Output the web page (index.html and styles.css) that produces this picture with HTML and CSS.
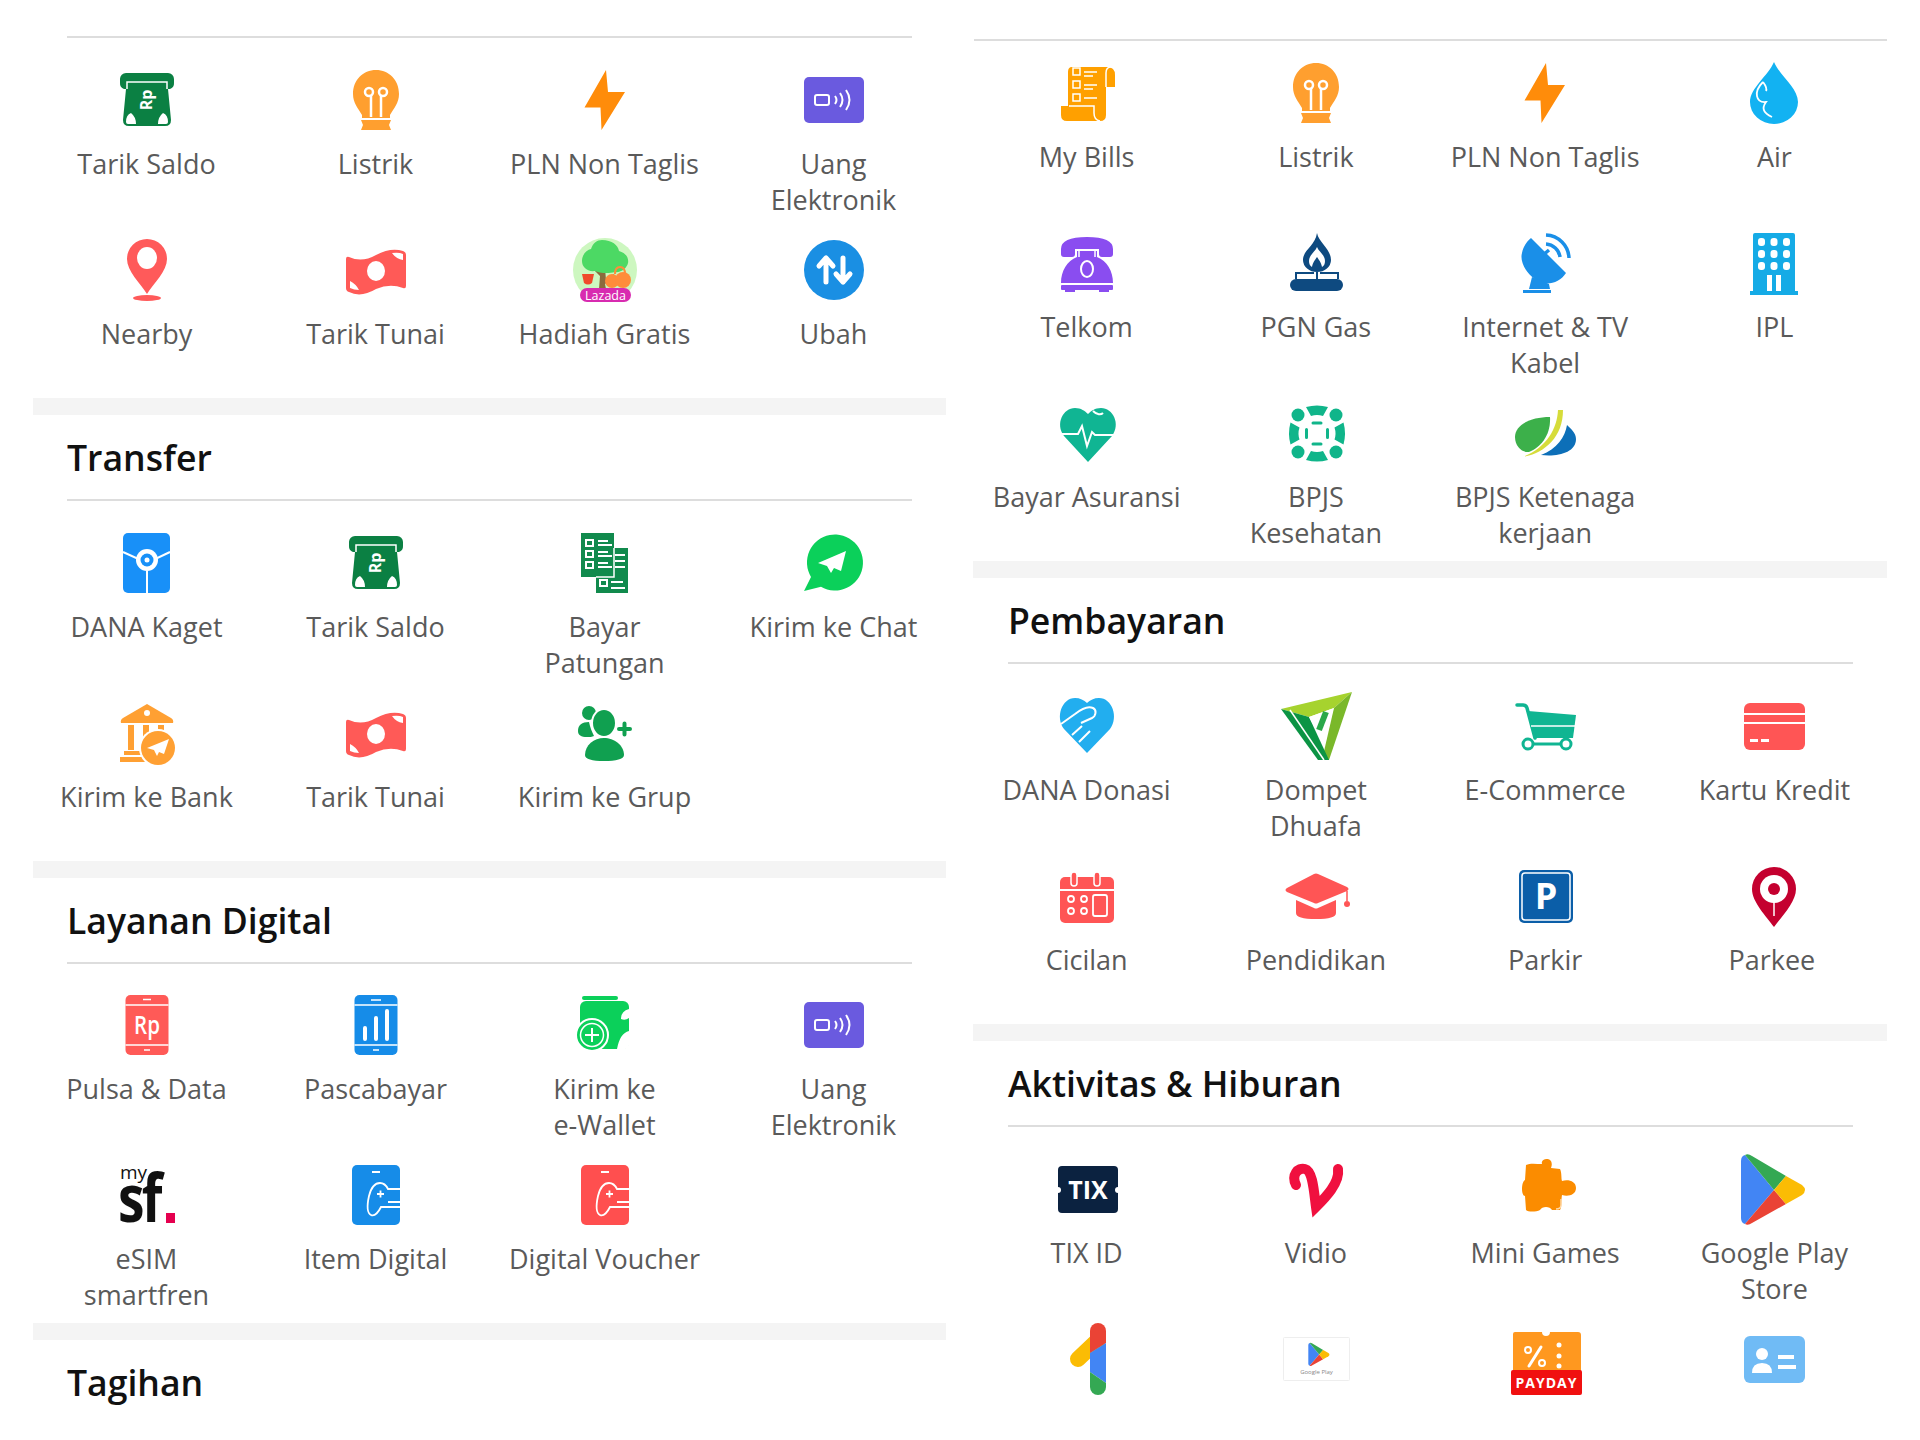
FILE: index.html
```html
<!DOCTYPE html>
<html lang="en">
<head>
    <meta charset="UTF-8">
    <meta name="viewport" content="width=device-width, initial-scale=1.0">
    <title>Semua Layanan</title>
    <link rel="stylesheet" href="styles.css">
</head>
<body>
    <!-- icon sprite: every symbol is centred on 40,40 -->
    <svg class="sprite" xmlns="http://www.w3.org/2000/svg">
        <defs>
            <g id="play-mark">
                <path fill="#4285f4" d="M7 12V69q0 5 4 6L40 41 11 6Q7 7 7 12z"/>
                <path fill="#34a853" d="M11 6q3-2 7 1L52 27 40 41z"/>
                <path fill="#ea4335" d="M11 75q3 2 7-1L52 55 40 41z"/>
                <path fill="#fbbc04" d="M52 27l16 9q6 5 0 10L52 55 40 41z"/>
            </g>
        </defs>
        <symbol id="i-saldo" viewBox="-10 -10 100 100">
            <path fill="#0b8043" d="M19 13h42a6 6 0 0 1 6 6v4a6 6 0 0 1-4 6h-2l3 31q0 6-6 6H22q-6 0-6-6l3-31h-2a6 6 0 0 1-4-6v-4a6 6 0 0 1 6-6z"/>
            <path fill="none" stroke="#fff" stroke-width="1.5" d="M20 29v-7h40v7"/>
            <path fill="#fff" d="M19 62q0-7 5-9 5 4 5 11h-8q-2 0-2-2zM61 62q0-7-5-9-5 4-5 11h8q2 0 2-2z"/>
            <text class="icon-text" transform="translate(45 40) rotate(-90)" text-anchor="middle" font-size="16" font-weight="700" fill="#fff">Rp</text>
        </symbol>
        <symbol id="i-listrik" viewBox="-10 -10 100 100">
            <path fill="#ff9f2f" d="M40 10c13 0 23 10 23 24 0 9-5 14-9 21v3H26v-3c-4-7-9-12-9-21 0-14 10-24 23-24zM25 60h30l-2 5 2 5H25l2-5z"/>
            <g fill="none" stroke="#fff" stroke-width="2.500"><circle cx="33" cy="32" r="4"/><circle cx="47" cy="32" r="4"/><path d="M35 36v21M45 36v21"/></g>
        </symbol>
        <symbol id="i-pln" viewBox="-10 -10 100 100">
            <path fill="#ff8c0a" d="M41 10 19.500 47.500h16L36.500 70 60 32H43z"/>
        </symbol>
        <symbol id="i-uang" viewBox="-10 -10 100 100">
            <rect x="10" y="17" width="60" height="46" rx="5" fill="#6a5adf"/>
            <g fill="none" stroke="#fff" stroke-width="2"><rect x="21" y="35" width="14" height="10" rx="2"/><path d="M41 36q3 4 0 8M46 33q5 7 0 14M52 30q7 10 0 20"/></g>
        </symbol>
        <symbol id="i-nearby" viewBox="-10 -10 100 100">
            <path fill="#ff5a5a" d="M40 9a20 20 0 0 1 20 20c0 12-13 24-20 35-7-11-20-23-20-35A20 20 0 0 1 40 9z"/>
            <ellipse cx="40" cy="28" rx="10" ry="11" fill="#fff"/>
            <ellipse cx="40" cy="68" rx="14" ry="3" fill="#ff5a5a"/>
        </symbol>
        <symbol id="i-tunai" viewBox="-10 -10 100 100">
            <path fill="#ff5a57" d="M10 29q0-3 3-2 13 6 27-2 15-8 27-4 3 1 3 4v31q0 3-3 2-13-5-27 1-15 9-27 3-3-1-3-4z"/>
            <ellipse cx="40" cy="41" rx="9" ry="10" fill="#fff"/>
            <path fill="#fff" d="M56 23q7-1 11 1v6q-7-1-11-7zM14 51q6 3 9 9-5 0-9-2z"/>
        </symbol>
        <symbol id="i-hadiah" viewBox="-10 -10 100 100">
            <circle cx="40" cy="40" r="32" fill="#cdf7c0"/>
            <path fill="#8b6b3d" d="M35 38h5l1 12 8-6v3l-9 7 1 5h-7l1-13-6-6 2-2 4 4z"/>
            <path fill="#4cd964" d="M37 10c10 0 16 5 17 11 7 2 10 7 9 12s-7 10-13 9c-7 2-16 1-20-1-8 1-13-4-13-10 0-7 5-11 9-12 2-6 6-9 11-9z"/>
            <path fill="#f04a2a" d="M17 44h12l-2 9q-4 3-8 0z"/>
            <circle cx="47" cy="51" r="7" fill="#ff8c3a"/><circle cx="58" cy="50" r="8" fill="#ff8c3a"/>
            <path fill="none" stroke="#ff8c3a" stroke-width="2" d="M50 44q0-7 5-7t5 7"/>
            <rect x="15" y="58" width="51" height="14" rx="7" fill="#d82bb0"/>
            <text class="icon-text" x="40.500" y="69.500" text-anchor="middle" font-size="12.500" fill="#fff">Lazada</text>
        </symbol>
        <symbol id="i-ubah" viewBox="-10 -10 100 100">
            <circle cx="40" cy="40" r="30" fill="#1a8fe3"/>
            <path fill="none" stroke="#fff" stroke-width="5" stroke-linecap="round" stroke-linejoin="round" d="M32 52V28l-7 8M32 28l7 8M49 28v24l-7-8M49 52l7-8"/>
        </symbol>
        <symbol id="i-kaget" viewBox="-10 -10 100 100">
            <rect x="16" y="10" width="47" height="60" rx="5" fill="#1890f8"/>
            <path fill="none" stroke="#fff" stroke-width="2" d="M16 29l24 11 23-11M40 48v22"/>
            <circle cx="40" cy="37" r="11" fill="#fff"/><circle cx="40" cy="37" r="6.500" fill="#1890f8"/><circle cx="40" cy="37" r="2.500" fill="#fff"/>
        </symbol>
        <symbol id="i-patungan" viewBox="-10 -10 100 100">
            <path fill="#118a4d" d="M16 10h33v15h14v45H31V54H16z"/>
            <path fill="none" stroke="#fff" stroke-width="2" d="M21 17h7v6h-7zM21 28h7v6h-7zM21 39h7v6h-7zM33 18h10M33 22h14M33 29h10M33 33h14M33 40h10M33 44h14M50 32h10M50 38h10M50 44h10M35 57h7v6h-7zM46 59h12M46 65h14"/>
            <path fill="none" stroke="#fff" stroke-width="1.500" d="M31 54h18V25"/>
        </symbol>
        <symbol id="i-chat" viewBox="-10 -10 100 100">
            <path fill="#0bd05a" d="M10 68l7-14A28 28 0 1 1 27 63.800z"/>
            <path fill="#fff" d="M52 28 24 40l9 3 4 7 3-5 7 3z"/>
        </symbol>
        <symbol id="i-bank" viewBox="-10 -10 100 100">
            <path fill="#ffa033" d="M40 11l24 14q3 2 2 5H14q-1-3 2-5z"/>
            <circle cx="40" cy="20" r="3" fill="#fff"/>
            <path fill="#ffa033" d="M21 32h6v25h-6zM36 32h6v22h-6zM51 32h6v5h-6zM17 58h22v4H17zM13 64h26v5H13z"/>
            <circle cx="51" cy="55" r="19" fill="#fff"/><circle cx="51" cy="55" r="17" fill="#ffa033"/>
            <path fill="#fff" d="M62 46 40 55l7 2 3 6 2-4 5 2z"/>
        </symbol>
        <symbol id="i-grup" viewBox="-10 -10 100 100">
            <g fill="#10a050">
                <circle cx="24" cy="20" r="7"/>
                <path d="M13 38c0-6 4-9 11-9 1 5 3 10 5 14-2 1-4 1-7 1-6 0-9-2-9-6z"/>
                <ellipse cx="39" cy="30" rx="12" ry="14" stroke="#fff" stroke-width="2"/>
                <path d="M20 62c0-10 9-17 19-17s20 7 20 17c0 4-8 6-20 6s-19-2-19-6z"/>
            </g>
            <path fill="none" stroke="#10a050" stroke-width="4" stroke-linecap="round" d="M54 36h11M59.500 30.500v11"/>
        </symbol>
        <symbol id="i-pulsa" viewBox="-10 -10 100 100">
            <rect x="18.500" y="10" width="43" height="60" rx="5" fill="#ff5a57"/>
            <path stroke="#fff" stroke-width="1.500" d="M18.500 20h43M18.500 60h43M36 14.500h8M37 65h6"/>
            <text class="icon-text" transform="translate(40 49) scale(.82 1)" text-anchor="middle" font-size="25" font-weight="600" fill="#fff">Rp</text>
        </symbol>
        <symbol id="i-pasca" viewBox="-10 -10 100 100">
            <rect x="18.500" y="10" width="43" height="60" rx="5" fill="#168ce8"/>
            <path stroke="#fff" stroke-width="1.500" d="M18.500 20h43M18.500 60h43M35 15h10M37 65h6"/>
            <path stroke="#fff" stroke-width="4" stroke-linecap="round" d="M29 54V43M40 54V33M51 54V26"/>
        </symbol>
        <symbol id="i-wallet" viewBox="-10 -10 100 100">
            <rect x="15" y="16" width="49" height="48" rx="6" fill="#0bd05a"/>
            <rect x="17" y="11" width="36" height="4" rx="2" fill="#0bd05a"/>
            <path fill="#fff" d="M64 24q-8 2-8 10 4 2 8-1zM64 46q-9 2-12 18h8q4 0 4-4z"/>
            <circle cx="27" cy="50" r="16" fill="#0bd05a" stroke="#fff" stroke-width="2"/>
            <circle cx="27" cy="50" r="11.500" fill="none" stroke="#fff" stroke-width="1.500"/>
            <path stroke="#fff" stroke-width="2" d="M20 50h14M27 43v14"/>
        </symbol>
        <symbol id="i-sf" viewBox="-10 -10 100 100">
            <text class="icon-text" x="13" y="24" font-size="19" fill="#111">my</text>
            <text class="icon-text" transform="translate(11 67) scale(.92 1.15)" font-size="58" font-weight="700" letter-spacing="-3" fill="#111">sf</text>
            <rect x="59" y="58" width="9" height="10" fill="#e5004f"/>
        </symbol>
        <symbol id="i-game" viewBox="-10 -10 100 100">
            <rect x="16" y="10" width="48" height="60" rx="5" fill="currentColor"/>
            <g fill="none" stroke="#fff" stroke-width="1.800">
                <path d="M36 17h8M64 34H52c-2-4-5-6-8-6-6 0-9 5-11 13-2 9-2 17 2 19 4 2 8-4 10-8h19M41 39h7M44.500 35.500v7M52 47h12"/>
            </g>
        </symbol>
        <symbol id="i-bills" viewBox="-10 -10 100 100">
            <path fill="#ffa000" d="M25 14h35q8 0 8 8v12h-9v28q0 6-6 6H20q-6 0-6-6v-9h7V19q0-5 4-5z"/>
            <path fill="none" stroke="#fff" stroke-width="1.500" d="M59 34V20q0-6 5-6M22 53h25v7q0 7 6 8M26 15h7v7h-7zM26 28h7v7h-7zM26 41h7v7h-7zM37 19h13M37 23h9M37 32h13M37 36h9M37 45h13"/>
        </symbol>
        <symbol id="i-air" viewBox="-10 -10 100 100">
            <path fill="#12b2f2" d="M40 9c6 14 24 26 24 40a24 22 0 0 1-48 0c0-14 18-26 24-40z"/>
            <path fill="none" stroke="#fff" stroke-width="1.800" d="M29 29c-10 10-7 21 3 20-5 7-2 11 6 15M29 29c3 4 4 7 3 9"/>
        </symbol>
        <symbol id="i-telkom" viewBox="-10 -10 100 100">
            <g fill="#8a4df0">
                <path d="M14 26q0-12 26-12t26 12v5q0 3-3 3h-8q-3 0-3-3v-5H28v5q0 3-3 3h-8q-3 0-3-3z"/>
                <path d="M30 28h20v6c10 4 16 14 16 26H14c0-12 6-22 16-26z"/>
                <rect x="14" y="62" width="52" height="5" rx="1"/><rect x="18" y="66" width="10" height="3"/><rect x="52" y="66" width="10" height="3"/>
            </g>
            <ellipse cx="40" cy="46" rx="6" ry="8" fill="none" stroke="#fff" stroke-width="2"/>
            <path stroke="#fff" stroke-width="1.500" d="M32 28v6M48 28v6"/>
        </symbol>
        <symbol id="i-gas" viewBox="-10 -10 100 100">
            <path fill="#0e4a80" d="M41 10c2 10 14 16 14 27a14 12 0 0 1-28 0c0-10 12-14 14-27z"/>
            <path fill="#fff" d="M41 24c2 5 8 8 8 14 0 3-1 5-3 6-1-5-3-7-5-10-2 3-4 5-5 10-2-1-3-3-3-6 0-6 6-9 8-14z"/>
            <path fill="none" stroke="#0e4a80" stroke-width="2" d="M20 56v-6h18M62 56v-6H44M41 49v7"/>
            <rect x="14" y="56" width="53" height="12" rx="6" fill="#0e4a80"/>
        </symbol>
        <symbol id="i-internet" viewBox="-10 -10 100 100">
            <path fill="#1a8fe8" d="M26 15 61 50c-5 8-15 12-23 10-14-4-24-20-21-30 1-6 5-12 9-15z"/>
            <path fill="#1a8fe8" d="M27 54l17 7 1 5H24zM18 67h28v3H18z"/>
            <path fill="none" stroke="#1a8fe8" stroke-width="3.500" d="M38 32l6-5M41 21a15 15 0 0 1 14 13M41 12a24 24 0 0 1 23 23"/>
        </symbol>
        <symbol id="i-ipl" viewBox="-10 -10 100 100">
            <path fill="#15abe6" d="M19 12q0-2 2-2h38q2 0 2 2v56h3v4H16v-4h3z"/>
            <g fill="#fff">
                <rect x="24" y="15" width="7" height="8" rx="3"/><rect x="36.500" y="15" width="7" height="8" rx="3"/><rect x="49" y="15" width="7" height="8" rx="3"/>
                <rect x="24" y="27" width="7" height="8" rx="3"/><rect x="36.500" y="27" width="7" height="8" rx="3"/><rect x="49" y="27" width="7" height="8" rx="3"/>
                <rect x="24" y="39" width="7" height="8" rx="3"/><rect x="36.500" y="39" width="7" height="8" rx="3"/><rect x="49" y="39" width="7" height="8" rx="3"/>
                <rect x="33" y="52" width="5" height="16"/><rect x="42" y="52" width="5" height="16"/>
            </g>
        </symbol>
        <symbol id="i-asuransi" viewBox="-10 -10 100 100">
            <path fill="#10b593" d="M41 69 17 43C8 31 16 15 28 15c6 0 10 3 13 6 3-3 7-6 13-6 12 0 20 16 11 28z"/>
            <path fill="none" stroke="#fff" stroke-width="2" d="M14 41h17l4-8 5 20 5-14 3 3h20M46 18c4 4 8 4 10 2"/>
        </symbol>
        <symbol id="i-bpjs" viewBox="-10 -10 100 100">
            <g fill="#10b58a">
                <circle cx="22" cy="22" r="6.500"/><circle cx="60" cy="22" r="6.500"/><circle cx="22" cy="59" r="6.500"/><circle cx="60" cy="59" r="6.500"/>
                <path d="M30 14q11-3 22 0l-5 9q-6-2-12 0z"/>
                <path d="M30 14q11-3 22 0l-5 9q-6-2-12 0z" transform="rotate(90 41 40.500)"/>
                <path d="M30 14q11-3 22 0l-5 9q-6-2-12 0z" transform="rotate(180 41 40.500)"/>
                <path d="M30 14q11-3 22 0l-5 9q-6-2-12 0z" transform="rotate(270 41 40.500)"/>
            </g>
            <path fill="none" stroke="#10b58a" stroke-width="3" stroke-linecap="round" d="M37 30h8M37 51h8M30.500 36.500v8M51.500 36.500v8"/>
        </symbol>
        <symbol id="i-bpjstk" viewBox="-10 -10 100 100">
            <path fill="#3cb04a" d="M45 24C25 24 10 32 10 44c0 10 8 16 14 15 12-5 22-17 21-35z"/>
            <path fill="#d6dc3a" d="M58 17h-5C52 36 42 54 18 64c22-4 40-20 40-47z"/>
            <path fill="#0d6fb8" d="M62 32C60 44 52 56 36 62c16 2 35-2 35-16 0-6-5-10-9-14z"/>
        </symbol>
        <symbol id="i-donasi" viewBox="-10 -10 100 100">
            <path fill="#22aeef" d="M40 67 17 43C8 31 15 12 28 12c5 0 9 2 12 5 3-3 7-5 12-5 13 0 20 19 11 31z"/>
            <path fill="none" stroke="#fff" stroke-width="2" d="M14 38 28 28c5-4 12-9 18-6 4 2 3 8-1 10l-11 5M25 49l10-9M32 56l11-11"/>
        </symbol>
        <symbol id="i-dompet" viewBox="-10 -10 100 100">
            <path fill="#a6d32e" d="M5 23 76 6 58 22 33 31z"/>
            <path fill="#7ab82a" d="M76 6 53 74h-7L58 22z"/>
            <path fill="#0b9444" d="M5 23l28 8 20 43H42z"/>
            <path stroke="#fff" stroke-width="1.500" d="M14 24l34 50"/>
            <path fill="#fff" d="M33 31l25-9-15 27z"/>
            <path stroke="#2aa84a" stroke-width="6" d="M50 26 43 44"/>
        </symbol>
        <symbol id="i-ecommerce" viewBox="-10 -10 100 100">
            <path fill="#10b592" d="M23 25l48 4-3 23H29z"/>
            <path fill="none" stroke="#10b592" stroke-width="3.500" stroke-linecap="round" d="M12 19h6q3 0 4 3l8 30"/>
            <path fill="none" stroke="#10b592" stroke-width="3" d="M29 58h26"/>
            <circle cx="23" cy="58" r="5" fill="none" stroke="#10b592" stroke-width="3"/><circle cx="61" cy="58" r="5" fill="none" stroke="#10b592" stroke-width="3"/>
            <path stroke="#fff" stroke-width="1.500" d="M26 40h44"/>
        </symbol>
        <symbol id="i-kartu" viewBox="-10 -10 100 100">
            <rect x="10" y="17" width="61" height="47" rx="6" fill="#ff5555"/>
            <path stroke="#fff" stroke-width="2" d="M10 28h61M10 37h61"/>
            <path fill="#fff" d="M16 53h8v3h-8zM27 53h8v3h-8z"/>
        </symbol>
        <symbol id="i-cicilan" viewBox="-10 -10 100 100">
            <rect x="13" y="21" width="54" height="46" rx="5" fill="#ff5555"/>
            <g fill="#ff5555" stroke="#fff" stroke-width="1.500"><rect x="24" y="16" width="6" height="14" rx="3"/><rect x="47" y="16" width="6" height="14" rx="3"/></g>
            <g fill="none" stroke="#fff" stroke-width="1.800">
                <path d="M13 34h54"/>
                <circle cx="24" cy="43" r="3"/><circle cx="37" cy="43" r="3"/><circle cx="24" cy="55" r="3"/><circle cx="37" cy="55" r="3"/>
                <rect x="46" y="39" width="14" height="21" rx="2"/>
            </g>
        </symbol>
        <symbol id="i-cap" viewBox="-10 -10 100 100">
            <path fill="#ff5555" d="M38 18q2-1 4 0l29 13q3 2 0 4L42 47q-2 1-4 0L11 36q-3-2 0-4zM20 44l18 8q2 1 4 0l18-8v13q0 6-20 6t-20-6z"/>
            <path fill="none" stroke="#ff5555" stroke-width="1.500" d="M71 35v10"/>
            <circle cx="71" cy="48" r="3" fill="#ff5555"/>
        </symbol>
        <symbol id="i-parkir" viewBox="-10 -10 100 100">
            <rect x="14" y="14" width="54" height="53" rx="5" fill="#0b5ea8"/>
            <rect x="17" y="17" width="48" height="47" rx="3" fill="none" stroke="#fff" stroke-width="1.500"/>
            <text class="icon-text" x="41" y="53" text-anchor="middle" font-size="36" font-weight="700" fill="#fff">P</text>
        </symbol>
        <symbol id="i-parkee" viewBox="-10 -10 100 100">
            <path fill="#c4002f" d="M40 11a22 22 0 0 1 22 22c0 13-14 27-22 38-8-11-22-25-22-38a22 22 0 0 1 22-22z"/>
            <circle cx="40" cy="33" r="14" fill="#fff"/><circle cx="40" cy="33" r="6" fill="#c4002f"/>
            <path stroke="#fff" stroke-width="1.500" d="M40 46v14"/>
        </symbol>
        <symbol id="i-tix" viewBox="-10 -10 100 100">
            <rect x="11" y="17" width="60" height="47" rx="4" fill="#0b2240"/>
            <circle cx="11" cy="41" r="3" fill="#fff"/><circle cx="71" cy="41" r="3" fill="#fff"/>
            <text class="icon-text" x="41" y="50" text-anchor="middle" font-size="25" font-weight="700" fill="#fff">TIX</text>
        </symbol>
        <symbol id="i-vidio" viewBox="-10 -10 100 100">
            <path fill="none" stroke="#f0103f" stroke-width="10" stroke-linecap="round" d="M20 36c-5-10 2-18 9-16 8 2 9 24 11 38 9-9 24-24 22-38"/>
        </symbol>
        <symbol id="i-games" viewBox="-10 -10 100 100">
            <path fill="#fb8c00" d="M42 10c4 0 6 4 4 9l9 1c2 4 1 9 2 12 6-2 14 0 14 7s-8 9-14 7c-1 5 0 12-2 15h-8c-2-4-10-4-12 0-4 2-12 2-14 0l-1-14c-4 0-4-14 0-16l1-15c4-2 10-1 16-1-1-3 2-5 5-5z"/>
            <path fill="none" stroke="#ffd9a8" stroke-width="1.500" d="M56 50v6q0 4-5 4"/>
        </symbol>
        <symbol id="i-gplay" viewBox="-10 -10 100 100">
            <use href="#play-mark"/>
        </symbol>
        <symbol id="i-gone" viewBox="-10 -10 100 100">
            <path fill="none" stroke="#fbbc04" stroke-width="16" stroke-linecap="round" d="M31 40l19-18"/>
            <path fill="#ea4335" d="M43 12a8 8 0 0 1 16 0V24L43 34z"/>
            <path fill="#4285f4" d="M43 34l16-10v40l-16-11z"/>
            <path fill="#34a853" d="M43 53l16 11v4a8 8 0 0 1-16 0z"/>
        </symbol>
        <symbol id="i-gcard" viewBox="-10 -10 100 100">
            <rect x="7.500" y="18.500" width="66" height="43" rx="1" fill="#fff" stroke="#eee"/>
            <use href="#play-mark" transform="translate(30 22) scale(.33)"/>
            <text class="icon-text" x="40.500" y="55" text-anchor="middle" font-size="6" fill="#888">Google Play</text>
        </symbol>
        <symbol id="i-payday" viewBox="-10 -10 100 100">
            <path fill="#ff981f" d="M10 13h27a4 4 0 0 0 8 0h28q3 0 3 3v38H8V15q0-2 2-2z"/>
            <rect x="6" y="51" width="71" height="25" rx="2" fill="#f01010"/>
            <text class="icon-text" x="41.500" y="69" text-anchor="middle" font-size="14" font-weight="700" letter-spacing="1" fill="#fff">PAYDAY</text>
            <path stroke="#fff" stroke-width="3" stroke-linecap="round" d="M36 28 24 47"/>
            <g fill="none" stroke="#fff" stroke-width="2"><circle cx="23" cy="31" r="3"/><circle cx="37" cy="44" r="3"/></g>
            <g fill="#fff"><circle cx="54" cy="26" r="2.500"/><circle cx="54" cy="37" r="2.500"/><circle cx="54" cy="47" r="2.500"/></g>
        </symbol>
        <symbol id="i-contact" viewBox="-10 -10 100 100">
            <rect x="10" y="17" width="61" height="47" rx="6" fill="#70bbf5"/>
            <circle cx="28" cy="35" r="6" fill="#fff"/>
            <path fill="#fff" d="M18 54q0-10 10-10t10 10zM44 36h16v4H44zM44 46h18v4H44z"/>
        </symbol>
    </svg>

    <div class="page">
        <div class="column column-left">
            <div class="rule"></div>
            <div class="menu-grid menu-grid-first">
                <div class="menu-item"><div class="icon"><svg><use href="#i-saldo"/></svg></div><div class="label">Tarik Saldo</div></div>
                <div class="menu-item"><div class="icon"><svg><use href="#i-listrik"/></svg></div><div class="label">Listrik</div></div>
                <div class="menu-item"><div class="icon"><svg><use href="#i-pln"/></svg></div><div class="label">PLN Non Taglis</div></div>
                <div class="menu-item"><div class="icon"><svg><use href="#i-uang"/></svg></div><div class="label">Uang<br>Elektronik</div></div>
                <div class="menu-item"><div class="icon"><svg><use href="#i-nearby"/></svg></div><div class="label">Nearby</div></div>
                <div class="menu-item"><div class="icon"><svg><use href="#i-tunai"/></svg></div><div class="label">Tarik Tunai</div></div>
                <div class="menu-item"><div class="icon"><svg><use href="#i-hadiah"/></svg></div><div class="label">Hadiah Gratis</div></div>
                <div class="menu-item"><div class="icon"><svg><use href="#i-ubah"/></svg></div><div class="label">Ubah</div></div>
            </div>
            <div class="band"></div>
            <div class="section-head"><h2>Transfer</h2></div>
            <div class="menu-grid">
                <div class="menu-item"><div class="icon"><svg><use href="#i-kaget"/></svg></div><div class="label">DANA Kaget</div></div>
                <div class="menu-item"><div class="icon"><svg><use href="#i-saldo"/></svg></div><div class="label">Tarik Saldo</div></div>
                <div class="menu-item"><div class="icon"><svg><use href="#i-patungan"/></svg></div><div class="label">Bayar<br>Patungan</div></div>
                <div class="menu-item"><div class="icon"><svg><use href="#i-chat"/></svg></div><div class="label">Kirim ke Chat</div></div>
                <div class="menu-item"><div class="icon"><svg><use href="#i-bank"/></svg></div><div class="label">Kirim ke Bank</div></div>
                <div class="menu-item"><div class="icon"><svg><use href="#i-tunai"/></svg></div><div class="label">Tarik Tunai</div></div>
                <div class="menu-item"><div class="icon"><svg><use href="#i-grup"/></svg></div><div class="label">Kirim ke Grup</div></div>
            </div>
            <div class="band"></div>
            <div class="section-head"><h2>Layanan Digital</h2></div>
            <div class="menu-grid menu-grid-tight">
                <div class="menu-item"><div class="icon"><svg><use href="#i-pulsa"/></svg></div><div class="label">Pulsa &amp; Data</div></div>
                <div class="menu-item"><div class="icon"><svg><use href="#i-pasca"/></svg></div><div class="label">Pascabayar</div></div>
                <div class="menu-item"><div class="icon"><svg><use href="#i-wallet"/></svg></div><div class="label">Kirim ke<br>e-Wallet</div></div>
                <div class="menu-item"><div class="icon"><svg><use href="#i-uang"/></svg></div><div class="label">Uang<br>Elektronik</div></div>
                <div class="menu-item"><div class="icon"><svg><use href="#i-sf"/></svg></div><div class="label">eSIM<br>smartfren</div></div>
                <div class="menu-item"><div class="icon icon-blue"><svg><use href="#i-game"/></svg></div><div class="label">Item Digital</div></div>
                <div class="menu-item"><div class="icon icon-red"><svg><use href="#i-game"/></svg></div><div class="label">Digital Voucher</div></div>
            </div>
            <div class="band"></div>
            <div class="section-head section-head-plain"><h2>Tagihan</h2></div>
        </div>

        <div class="column column-right">
            <div class="rule rule-wide"></div>
            <div class="menu-grid menu-grid-top">
                <div class="menu-item"><div class="icon"><svg><use href="#i-bills"/></svg></div><div class="label">My Bills</div></div>
                <div class="menu-item"><div class="icon"><svg><use href="#i-listrik"/></svg></div><div class="label">Listrik</div></div>
                <div class="menu-item"><div class="icon"><svg><use href="#i-pln"/></svg></div><div class="label">PLN Non Taglis</div></div>
                <div class="menu-item"><div class="icon"><svg><use href="#i-air"/></svg></div><div class="label">Air</div></div>
                <div class="menu-item"><div class="icon"><svg><use href="#i-telkom"/></svg></div><div class="label">Telkom</div></div>
                <div class="menu-item"><div class="icon"><svg><use href="#i-gas"/></svg></div><div class="label">PGN Gas</div></div>
                <div class="menu-item"><div class="icon"><svg><use href="#i-internet"/></svg></div><div class="label">Internet &amp; TV<br>Kabel</div></div>
                <div class="menu-item"><div class="icon"><svg><use href="#i-ipl"/></svg></div><div class="label">IPL</div></div>
                <div class="menu-item"><div class="icon"><svg><use href="#i-asuransi"/></svg></div><div class="label">Bayar Asuransi</div></div>
                <div class="menu-item"><div class="icon"><svg><use href="#i-bpjs"/></svg></div><div class="label">BPJS<br>Kesehatan</div></div>
                <div class="menu-item"><div class="icon"><svg><use href="#i-bpjstk"/></svg></div><div class="label">BPJS Ketenaga<br>kerjaan</div></div>
            </div>
            <div class="band"></div>
            <div class="section-head"><h2>Pembayaran</h2></div>
            <div class="menu-grid">
                <div class="menu-item"><div class="icon"><svg><use href="#i-donasi"/></svg></div><div class="label">DANA Donasi</div></div>
                <div class="menu-item"><div class="icon"><svg><use href="#i-dompet"/></svg></div><div class="label">Dompet<br>Dhuafa</div></div>
                <div class="menu-item"><div class="icon"><svg><use href="#i-ecommerce"/></svg></div><div class="label">E-Commerce</div></div>
                <div class="menu-item"><div class="icon"><svg><use href="#i-kartu"/></svg></div><div class="label">Kartu Kredit</div></div>
                <div class="menu-item"><div class="icon"><svg><use href="#i-cicilan"/></svg></div><div class="label">Cicilan</div></div>
                <div class="menu-item"><div class="icon"><svg><use href="#i-cap"/></svg></div><div class="label">Pendidikan</div></div>
                <div class="menu-item"><div class="icon"><svg><use href="#i-parkir"/></svg></div><div class="label">Parkir</div></div>
                <div class="menu-item"><div class="icon"><svg><use href="#i-parkee"/></svg></div><div class="label label-parkee">Parkee</div></div>
            </div>
            <div class="band"></div>
            <div class="section-head"><h2>Aktivitas &amp; Hiburan</h2></div>
            <div class="menu-grid">
                <div class="menu-item"><div class="icon"><svg><use href="#i-tix"/></svg></div><div class="label">TIX ID</div></div>
                <div class="menu-item"><div class="icon"><svg><use href="#i-vidio"/></svg></div><div class="label">Vidio</div></div>
                <div class="menu-item"><div class="icon"><svg><use href="#i-games"/></svg></div><div class="label">Mini Games</div></div>
                <div class="menu-item"><div class="icon"><svg><use href="#i-gplay"/></svg></div><div class="label">Google Play<br>Store</div></div>
                <div class="menu-item"><div class="icon"><svg><use href="#i-gone"/></svg></div></div>
                <div class="menu-item"><div class="icon"><svg><use href="#i-gcard"/></svg></div></div>
                <div class="menu-item"><div class="icon"><svg><use href="#i-payday"/></svg></div></div>
                <div class="menu-item"><div class="icon"><svg><use href="#i-contact"/></svg></div></div>
            </div>
        </div>
    </div>
</body>
</html>
```

FILE: styles.css
```css
body {
    margin: 0;
    height: 1440px;
    overflow: hidden;
    background-color: #fff;
    font-family: "Open Sans", Arial, sans-serif;
}

.sprite {
    display: none;
}

.icon-text {
    font-family: "Open Sans", Arial, sans-serif;
}

.page {
    display: flex;
    align-items: flex-start;
    gap: 24px;
    padding-left: 32px;
}

.column-left {
    width: 916px;
    padding-top: 36px;
}

.column-right {
    width: 917px;
    padding-top: 39px;
}

.rule {
    height: 2px;
    margin: 0 36px 0 35px;
    background-color: #ddd;
}

.rule-wide {
    margin: 0 2px;
}

.band {
    height: 17px;
    margin: 0 2px 0 1px;
    background-color: #f4f4f4;
}

.section-head {
    display: flex;
    align-items: center;
    height: 84px;
    margin: 0 36px 0 35px;
    border-bottom: 2px solid #ddd;
}

.column-right .section-head {
    margin-left: 36px;
}

.section-head-plain {
    border-bottom-color: transparent;
}

h2 {
    margin: 0;
    font-size: 35.6px;
    font-weight: 600;
    color: #111;
}

.menu-grid {
    display: grid;
    grid-template-columns: repeat(4, 1fr);
    grid-auto-rows: 147px;
    row-gap: 23px;
    padding: 32px 0 11px;
}

.menu-grid-tight {
    padding-top: 31px;
}

.menu-grid-top {
    padding-top: 22px;
}

.menu-item {
    text-align: center;
}

.icon {
    display: flex;
    justify-content: center;
    align-items: center;
    height: 60px;
}

.icon svg {
    flex: none;
    width: 100px;
    height: 100px;
}

.icon-blue {
    color: #168ce8;
}

.icon-red {
    color: #ff4f4f;
}

.label {
    margin-top: 16px;
    font-size: 27px;
    line-height: 35.5px;
    color: #5a5a5a;
    white-space: nowrap;
}

.label-parkee {
    padding-right: 5px;
}
```
